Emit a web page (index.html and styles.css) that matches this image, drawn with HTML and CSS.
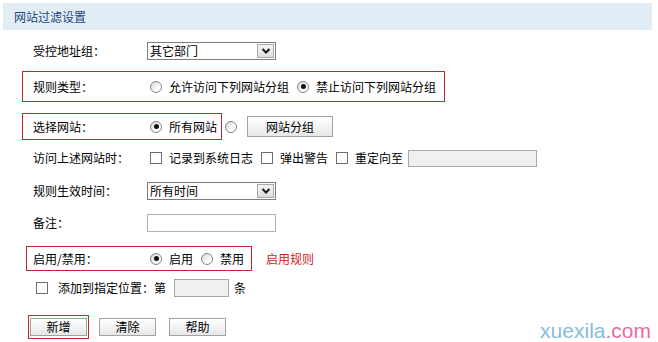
FILE: index.html
```html
<!DOCTYPE html>
<html lang="zh-CN">
<head>
<meta charset="utf-8">
<title>网站过滤设置</title>
<link rel="stylesheet" href="styles.css">
</head>
<body>
<div class="page">
  <div class="header">网站过滤设置</div>
  <div class="form">
    <div class="row r1">
      <span class="label">受控地址组：</span>
      <span class="select"><span class="select-text">其它部门</span><span class="select-btn"><svg width="10" height="8" viewBox="0 0 10 8"><polyline points="1.5,2 5,5.5 8.5,2" fill="none" stroke="#1a1a1a" stroke-width="2"/></svg></span></span>
    </div>
    <div class="row r2 boxed box-rule">
      <span class="label">规则类型：</span>
      <span class="radio"></span><span class="opt">允许访问下列网站分组</span>
      <span class="radio on"></span><span class="opt">禁止访问下列网站分组</span>
    </div>
    <div class="row r3 site-row">
      <div class="boxed box-site">
        <span class="label">选择网站：</span>
        <span class="radio on"></span><span class="opt">所有网站</span>
      </div>
      <span class="radio"></span>
      <span class="btn btn-wide">网站分组</span>
    </div>
    <div class="row r4">
      <span class="label">访问上述网站时：</span>
      <span class="check"></span><span class="opt">记录到系统日志</span>
      <span class="check"></span><span class="opt">弹出警告</span>
      <span class="check"></span><span class="opt">重定向至</span>
      <span class="input input-gray input-redirect"></span>
    </div>
    <div class="row r5">
      <span class="label">规则生效时间：</span>
      <span class="select"><span class="select-text">所有时间</span><span class="select-btn"><svg width="10" height="8" viewBox="0 0 10 8"><polyline points="1.5,2 5,5.5 8.5,2" fill="none" stroke="#1a1a1a" stroke-width="2"/></svg></span></span>
    </div>
    <div class="row r6">
      <span class="label">备注：</span>
      <span class="input input-note"></span>
    </div>
    <div class="row r7 state-row">
      <div class="boxed box-state">
        <span class="label">启用/禁用：</span>
        <span class="radio on"></span><span class="opt">启用</span>
        <span class="radio"></span><span class="opt">禁用</span>
      </div>
      <span class="hint">启用规则</span>
    </div>
    <div class="row r8 pos-row">
      <span class="check check-pos"></span>
      <span class="pos-text">添加到指定位置：第</span>
      <span class="input input-gray input-pos"></span>
      <span class="pos-unit">条</span>
    </div>
    <div class="row r9 actions">
      <span class="focus-wrap"><span class="btn btn-act">新增</span></span>
      <span class="btn btn-act btn-clear">清除</span>
      <span class="btn btn-act btn-help">帮助</span>
    </div>
  </div>
  <div class="watermark"><span class="wm-a">xuexila</span><span class="wm-b">.com</span></div>
</div>
</body>
</html>
```
FILE: styles.css
```css
* { box-sizing: border-box; }
html, body { margin: 0; padding: 0; background: #fff; }
body {
  font-family: "Noto Sans CJK SC", "Noto Sans", sans-serif;
  font-size: 12px;
  color: #000;
  width: 658px;
  height: 342px;
  overflow: hidden;
}
.page { position: relative; width: 658px; height: 342px; }

.header {
  margin: 3px 6px 0 3px;
  height: 27px;
  line-height: 27px;
  padding-left: 11px;
  background: #e2ecf4;
  color: #1b4a82;
  font-size: 12px;
}

.form { display: flex; flex-direction: column; }

.row {
  display: flex;
  align-items: center;
  padding-left: 33px;
  height: 18px;
  line-height: 18px;
  white-space: nowrap;
}
.r1 { margin-top: 12px; }
.r2 { margin-top: 11px; height: 31px; }
.r3 { margin-top: 11px; height: 27px; }
.r4 { margin-top: 9px; }
.r5 { margin-top: 15px; }
.r6 { margin-top: 14px; }
.r7 { margin-top: 14px; height: 25px; }
.r8 { margin-top: 8px; }
.r9 { margin-top: 18px; height: 24px; }

.label { width: 114px; flex: none; }

.boxed {
  display: flex;
  align-items: center;
  border: 1px solid #c0262d;
}
.box-rule { margin-left: 22px; padding-left: 10px; width: 423px; }
.site-row { padding-left: 22px; }
.box-site { height: 27px; padding-left: 10px; width: 200px; }
.state-row { padding-left: 26px; }
.box-state { height: 25px; padding-left: 6px; width: 226px; }

.radio {
  flex: none;
  position: relative;
  width: 12px;
  height: 12px;
  margin: 0 7px 0 3px;
  border: 1px solid #858585;
  border-radius: 50%;
  background: linear-gradient(135deg, #d6d6d6, #fff 70%);
}
.radio.on::after {
  content: "";
  position: absolute;
  left: 2.5px;
  top: 2.5px;
  width: 5px;
  height: 5px;
  border-radius: 50%;
  background: #111;
}
.opt { margin-right: 5px; }

.check {
  flex: none;
  width: 12px;
  height: 12px;
  margin: 0 7px 0 3px;
  border: 1px solid #6f6f6f;
  background: #fff;
}

.select {
  flex: none;
  display: flex;
  width: 129px;
  height: 18px;
  border: 1px solid #7d7d7d;
  background: #fff;
}
.select-text { flex: 1; padding-left: 2px; line-height: 16px; }
.select-btn {
  flex: none;
  display: flex;
  align-items: center;
  justify-content: center;
  width: 17px;
  margin: 1px;
  border: 1px solid #a9a9a9;
  background: linear-gradient(#f4f4f4, #dedede);
}

.input {
  flex: none;
  height: 18px;
  border: 1px solid #a8a8a8;
  background: #fff;
}
.input-gray { background: #f0f0f0; height: 17px; }
.input-redirect { width: 129px; }
.input-note { width: 129px; border-color: #b2b2b2; }

.btn {
  flex: none;
  display: flex;
  align-items: center;
  justify-content: center;
  border: 1px solid #a3a3a3;
  background: linear-gradient(#ffffff, #e7e7e7);
  color: #000;
}
.btn-wide { width: 86px; height: 21px; margin-left: 3px; }

.hint { color: #cc1c22; margin-left: 14px; }

.pos-row { padding-left: 36px; }
.check-pos { margin: 0 10px 0 0; }
.pos-text { margin-right: 8px; }
.input-pos { width: 55px; height: 18px; }
.pos-unit { margin-left: 5px; }

.actions { padding-left: 28px; }
.focus-wrap {
  display: flex;
  align-items: center;
  height: 24px;
  padding: 2px 1px;
  border: 1px solid #c0262d;
}
.btn-act { width: 57px; height: 18px; }
.btn-clear { margin-left: 10px; }
.btn-help { margin-left: 13px; }

.watermark {
  position: absolute;
  right: 7px;
  bottom: 2px;
  font-family: "Liberation Sans", Arial, sans-serif;
  font-size: 21px;
  line-height: 24px;
}
.wm-a { color: #88bcda; }
.wm-b { color: #ec6aa6; }
```
